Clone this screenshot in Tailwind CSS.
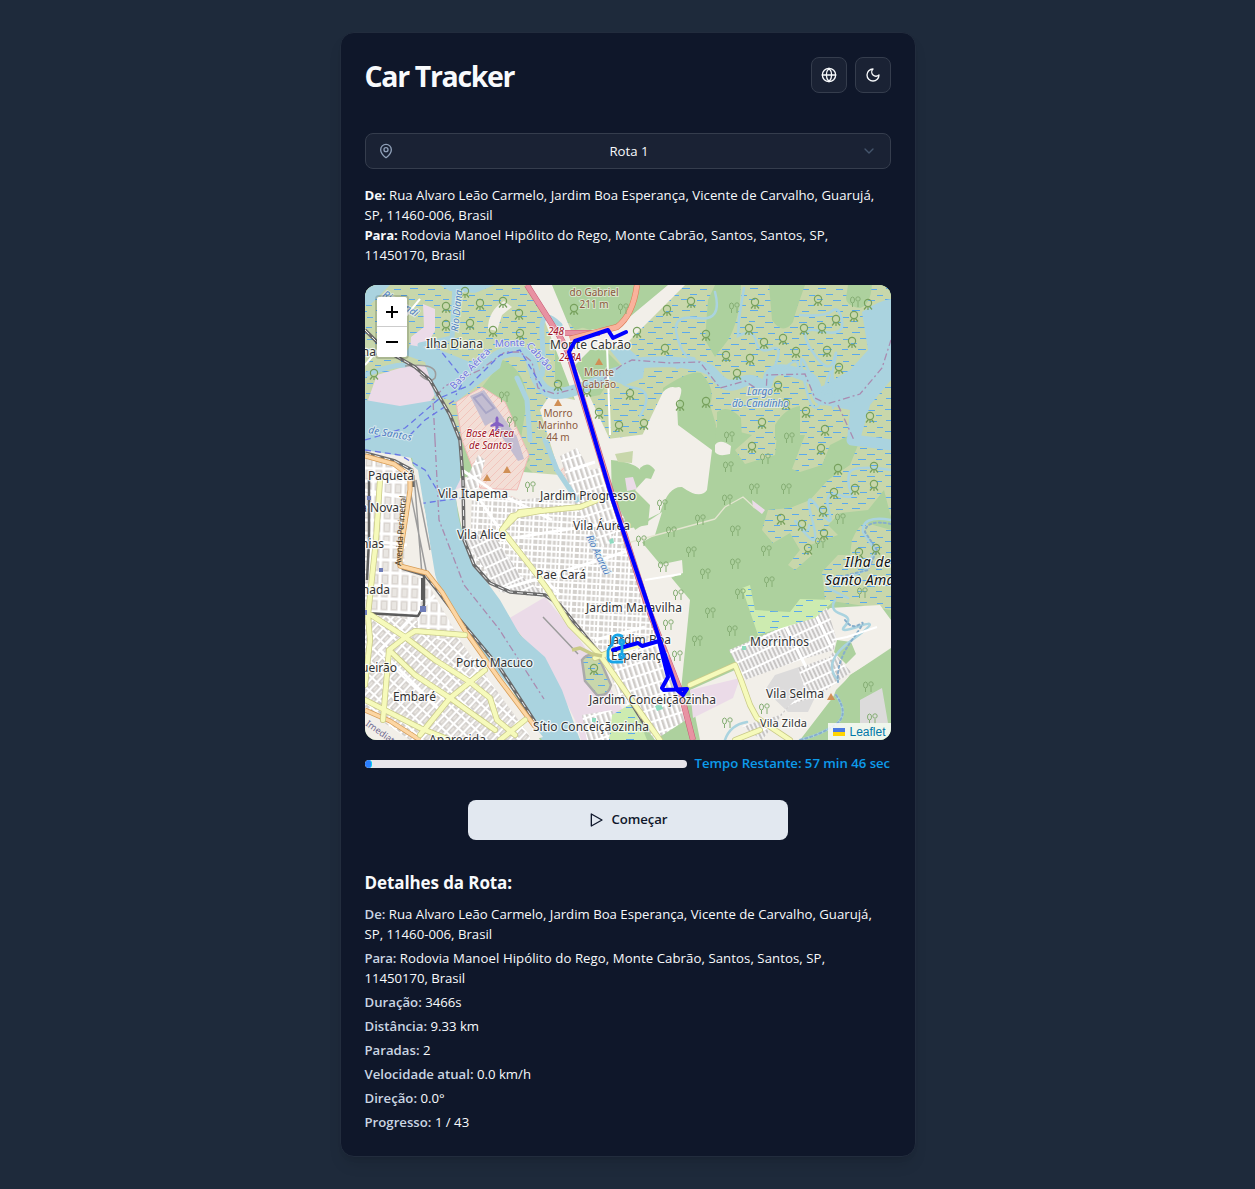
<!DOCTYPE html>
<html lang="pt-BR">
<head>
<meta charset="utf-8">
<title>Car Tracker</title>
<script src="https://cdn.jsdelivr.net/npm/@tailwindcss/browser@4"></script>
</head>
<body class="min-h-screen bg-[#1e2a3b] p-8 font-['Segoe_UI','Open_Sans',sans-serif] text-[13.2px] text-slate-50">
<main class="mx-auto max-w-xl rounded-[14px] border border-[#222c3d] bg-[#0f172a] shadow-lg">
  <header class="flex items-center justify-between p-6">
    <h1 class="pt-[3px] text-[28.5px] leading-[33px] font-bold tracking-[-1.35px]">Car Tracker</h1>
    <div class="flex gap-2">
      <button class="flex size-9 items-center justify-center rounded-lg border border-[#353d4d] bg-[#1a2234]">
        <svg class="size-4" viewBox="0 0 24 24" fill="none" stroke="currentColor" stroke-width="2" stroke-linecap="round" stroke-linejoin="round"><circle cx="12" cy="12" r="10"/><path d="M12 2a14.5 14.5 0 0 0 0 20 14.5 14.5 0 0 0 0-20M2 12h20"/></svg>
      </button>
      <button class="flex size-9 items-center justify-center rounded-lg border border-[#353d4d] bg-[#1a2234]">
        <svg class="size-4" viewBox="0 0 24 24" fill="none" stroke="currentColor" stroke-width="2" stroke-linecap="round" stroke-linejoin="round"><path d="M12 3a6 6 0 0 0 9 9 9 9 0 1 1-9-9Z"/></svg>
      </button>
    </div>
  </header>
  <div class="px-6 pt-4 pb-6">
    <button class="flex h-9 w-full items-center justify-between rounded-lg border border-[#353d4d] bg-[#1a2234] px-3">
      <svg class="size-4 text-slate-400" viewBox="0 0 24 24" fill="none" stroke="currentColor" stroke-width="2" stroke-linecap="round" stroke-linejoin="round"><path d="M20 10c0 4.993-5.539 10.193-7.399 11.799a1 1 0 0 1-1.202 0C9.539 20.193 4 14.993 4 10a8 8 0 0 1 16 0"/><circle cx="12" cy="10" r="3"/></svg>
      <span class="pt-px pl-[3px]">Rota 1</span>
      <svg class="size-4 text-slate-600" viewBox="0 0 24 24" fill="none" stroke="currentColor" stroke-width="2" stroke-linecap="round" stroke-linejoin="round"><path d="m6 9 6 6 6-6"/></svg>
    </button>
    <div class="mt-4 leading-5">
      <p class="tracking-[0.03px]"><b class="tracking-[-0.1px]">De:</b> Rua Alvaro Leão Carmelo, Jardim Boa Esperança, Vicente de Carvalho, Guarujá,<br>SP, 11460-006, Brasil</p>
      <p class="tracking-[0.1px]"><b class="tracking-[-0.2px]">Para:</b> Rodovia Manoel Hipólito do Rego, Monte Cabrão, Santos, Santos, SP,<br><span class="tracking-[-0.05px]">11450170, Brasil</span></p>
    </div>

    <section class="relative mt-5 h-[455px] overflow-hidden rounded-xl bg-[#add19e]">
      <svg class="block size-full" viewBox="365 285 526 455" preserveAspectRatio="none" font-family="Noto Sans" font-size="12">
        <defs>
          <pattern id="marsh" width="34" height="22" patternUnits="userSpaceOnUse">
            <rect width="34" height="22" fill="#c8d7ab"/>
            <path d="M2 2.500h8M20 3.500h7M10 8.500h7M27 9.500h6M1 13.500h6M17 14.500h8M8 19.500h8M26 19.500h6" stroke="#5aa9ee"/>
          </pattern>
          <pattern id="wet" width="24" height="16" patternUnits="userSpaceOnUse">
            <rect width="24" height="16" fill="#cdebb0"/><path d="M2 3.500h8M14 8.500h7M4 13.500h7" stroke="#5aa9ee"/>
          </pattern>
          <pattern id="gridA" width="14" height="6" patternUnits="userSpaceOnUse" patternTransform="rotate(3)">
            <rect width="14" height="6" fill="#fff"/><path d="M1 1h4v4H1zM6.500 1h3v4h-3zM11 1h2v4h-2z" fill="#d3d0cc"/>
          </pattern>
          <pattern id="gridB" width="5" height="12" patternUnits="userSpaceOnUse" patternTransform="rotate(-18)">
            <rect width="5" height="12" fill="#fff"/><path d="M1 1h2.500v10H1z" fill="#cfccc9"/>
          </pattern>
          <pattern id="gridC" width="10" height="13" patternUnits="userSpaceOnUse" patternTransform="rotate(2)">
            <rect width="10" height="13" fill="#fff"/><path d="M1.500 1.500h7v10h-7z" fill="#d9d4cf"/><path d="M3 3h4v7H3z" fill="#e9e6e2"/>
          </pattern>
          <pattern id="gridD" width="11" height="6.500" patternUnits="userSpaceOnUse" patternTransform="rotate(-47)">
            <rect width="11" height="6.500" fill="#fff"/><path d="M1 1h9v4.300H1z" fill="#d3cfcb"/><path d="M3 2.300h5v1.700H3z" fill="#eae7e2"/>
          </pattern>
          <pattern id="gridE" width="4" height="12" patternUnits="userSpaceOnUse" patternTransform="rotate(-25)">
            <rect width="4" height="12" fill="#fff"/><path d="M.800 1h2.400v10H.800z" fill="#c8c6c5"/>
          </pattern>
          <pattern id="hatch" width="8" height="8" patternUnits="userSpaceOnUse">
            <rect width="8" height="8" fill="#f3ded6"/><path d="M0 8 8 0" stroke="#f2c5bd"/>
          </pattern>
          <g id="mangrove" fill="none" stroke="#77a15d" stroke-width="1.200"><circle r="3.600"/><path d="M-1.500 3.500-4 6.500M0 4v3M1.500 3.500 4 6.500"/></g>
          <g id="tree" fill="none" stroke="#86ae75" stroke-width="1"><ellipse cx="-2.500" cy="-1" rx="2" ry="3"/><path d="M-2.500 2v4M3 1v5"/><circle cx="3" cy="-2" r="2.200"/></g>
          <path id="peak" d="M0-4 4 3H-4z" fill="#d08f55"/>
        </defs>

        <!-- forest and mangrove -->
        <path fill="#add19e" d="M365 285h526v455H365z"/>
        <path fill="url(#marsh)" d="M365 285H530L560 310 575 330 640 310 680 285H891V440L860 440 850 465 828 480 810 500 790 508 768 510 762 530 773 543 790 533 800 550 788 565 795 570 812 555 810 545 838 535 828 525 840 513 868 510 884 490 891 517V440L850 435 830 445 822 465 800 472 792 469 805 435 777 435 775 455 745 464 735 450 752 435 720 427 700 430 660 440 600 440 560 480 540 480 500 440 365 440z"/>
        <path fill="url(#marsh)" d="M852 540Q858 525 866 523L891 530V610L825 600 822 572 838 555 850 555z"/>
        <path fill="#add19e" d="M715 285H741Q740 320 728 340L715 357 705 340 708 300zM769 285H805Q796 310 793 322 783 336 772 320zM848 285H872Q870 308 858 308 846 305 846 298zM663 388Q690 370 701 373 716 388 710 405L716 425 715 440H660zM717 412Q728 404 741 418L742 440H717zM775 425Q785 408 800 406V440H775z"/>
        <path fill="#add19e" d="M535 285H680L650 305 625 325 590 330 560 320zM482 387 503 360Q525 370 527 400L520 445 530 460 510 480 490 440zM555 345h45l20 20-20 30-25 5-20-20z"/>

        <!-- clearings -->
        <path fill="#f2efe9" d="M531 285H552L572 333 620 325 668 285H685L625 345 590 350 575 365 610 440 611 480 640 540 690 600 680 700 600 740H365V450L410 455 425 510 450 590 490 650 540 740 580 740 540 660 490 590 465 545 452 480 500 470 560 475 540 410 550 395 575 400zM583 400 600 440 662 432 664 395Q690 375 677 405L678 425 712 450 707 490Q700 500 682 487 668 486 660 513L625 530 600 470zM715 445Q720 438 731 446L730 454Q718 457 715 452zM620 540 662 512 655 535 620 555zM635 570 682 560 683 573 645 588zM780 657 830 608 880 605 891 620V650L850 675 800 740H700L690 690 735 670z"/>
        <path fill="#add19e" d="M611 460Q640 462 646 478L635 490 650 505 648 525 620 530 612 500zM640 468q8-8 15 2l-4 9-10-2zM837 640l14 2 5 12-10 10-12-12zM836 690 852 674 891 648V740H806L826 715z"/>
        <path fill="#f2efe9" d="M663 392Q672 383 680 390L672 408 678 440H640z"/>
        <path fill="#c8d7ab" d="m615 454 18-3-1 12-14-1z"/>
        <path fill="#f2efe9" d="M488 329q0-18 16-28l8 6-10 8-5 16z"/>

        <!-- ports and pink industrial areas -->
        <path fill="#ebdbe8" d="M423 304 435 309V331L426 345 428 357 410 354 411 337 424 327zM377 375 410 365 425 366 438 390 430 402 406 406H370L368 400zM508 619 545 597 580 640 600 670 640 740H581L575 720 560 690 540 660zM625 478l8-1 4 12-10 2zM752 500l13 10-3 4-9-7zM690 690l50-12-7 20-40 20zM448 482l12-5 2 10-10 4z"/>
        <path fill="url(#hatch)" stroke="#f0b9b6" d="M456 402 482 387 505 402 529 455 517 490 480 488 462 440z"/>
        <path fill="#c3bdd1" d="m470 396 14-6 14 20 19 27 7 22-6 2-26-39-7 4z"/>
        <path fill="none" stroke="#a8a5c6" stroke-width="2" d="m474 398 8-4 12 14-8 5z"/>
        <path fill="#dcdbdb" d="M765 690l10-15 30-10 15 22-12 25-20 0zM860 700l22-12 6 35h-28z"/>
        <path fill="url(#hatch)" d="m492 500 20-4 20 10-5 18-30-10zM560 470l8-8 12 25-10 6z"/>

        <!-- urban fabric -->
        <path fill="url(#gridC)" d="M365 458 408 466 404 570 440 590 440 640 365 617z"/>
        <path fill="url(#gridD)" d="M365 612 440 625 462 640 530 730V740H410L365 710z"/>
        <path fill="url(#gridC)" d="M418 590 440 590 470 634 440 640 418 632z"/>
        <path fill="url(#gridA)" d="M472 490 500 492 520 500 600 490 620 510 655 630 660 670 625 680 580 625 550 598 500 590 470 560z"/>
        <path fill="url(#gridE)" d="M465 540 500 592 550 598 520 575 490 530z"/>
        <path fill="url(#gridB)" d="M560 456 577 448 590 470 600 468 625 520 603 548 575 505z"/>
        <path fill="url(#gridB)" d="M605 660 655 635 680 700 686 720 655 740 640 720 620 700zM582 715l30-5 15 30h-40zM462 488 478 455 485 460 478 490z"/>
        <path fill="url(#gridE)" d="M729 650 827 608 836 637 834 650 800 660 745 680zM798 668 826 658 832 675 805 690zM833 652 851 672 820 695 790 705 762 740 742 726 780 715 805 690z"/>
        <path d="m462 470 30 20 60 30M500 590 600 560 630 550M500 540l95-15M480 500l30 45 50 50M605 660l55-22M595 640l50-13M365 490l50 10M365 540l42 5M440 590l-60 60 60 60M570 470l25-8M786 627l20 40M815 613l17 35" fill="none" stroke="#fff" stroke-width="3"/>
        <path fill="url(#wet)" d="M742 588 750 585 755 610 790 612 800 599 835 600 815 618 758 635z"/>
        <path fill="url(#marsh)" stroke="#aaa" stroke-width="2.500" d="M582 660q8-10 18 0l11 25q-3 12-14 10l-12-14z"/>
        <path fill="url(#wet)" d="M612 715l20-12 15 37h-38z"/>
        <path fill="#8fdbc0" d="m609 540 4-2 1 5-4 1zM742 646h4v4h-4zM655 706l6-2 2 5-6 2zM592 718h4v4h-4z"/>

        <!-- water -->
        <g fill="#aad3df">
          <path d="M365 400 400 406 436 400 425 362 405 355 410 345 440 350 470 362 485 356 505 350 500 368 456 402 440 397 460 438 460 480 455 490 458 515 465 545 478 570 500 600 520 635 545 657 562 690 580 740H542L520 700 470 638 440 588 433 570 425 510 412 458 365 450zM440 285h55l-20 8-25-2zM365 285h25l-20 20h-5z"/>
          <path d="M862 312Q880 300 891 299V380L870 405 860 440H847L850 410 825 405 812 390 825 385 850 370 868 350z"/>
          <path d="M610 350 628 348 645 363 643 378 625 385 610 380 600 385 600 372 622 365z"/>
        </g>
        <g fill="none" stroke="#aad3df" stroke-linecap="round">
          <path stroke-width="11" d="M490 363C500 348 528 348 531 360S538 390 552 393 590 385 605 378M628 365C650 360 690 360 710 370 721 382 726 390 742 382S765 396 768 380 790 370 806 376 812 398 823 400L850 397M852 440l25 3 14 2"/>
          <path stroke-width="5" d="M420 345 452 338 455 285M365 375q25-10 40-10M560 325q-20-20-18 10t0 40M517 378l10 22 3 40M545 440l12 30 20 30"/>
          <path stroke-width="2.500" d="M715 292q8 30-18 26t-20 18 15 22-15 10M744 288l-5 30-1 18q15-8 18 5t15 8 5 14 10 4 10 10M800 315q25 2 32-4t10 10-22 10-8 20 22 8-2 16-22-1-5 10 20 4 8 20M891 470q-40-6-42 4t2 18-12 3-10 16-10-2-7 10-7 14-6-8 10 0M891 520q-30-5-28 12l12 18-9 20-30 12q-15-16-8 6l20 10M620 370q-5 15 15 18t5 28M835 600q-6 10 6 14t4 12 15 0-8 14-14 40M836 695Q850 715 835 725T800 740M725 740q5-15 22-18"/>
          <path stroke-width="2" stroke="#87aecb" stroke-dasharray="2 3" d="M891 524q-25-5-26 8l12 18-9 20-32 8M845 620q7 10 15 4t-8 16-14 42M836 695Q850 715 835 725T800 740"/>
        </g>
        <g fill="none">
          <path stroke="#aa8bb0" stroke-width="1.300" stroke-dasharray="7 3 2 3" d="M435 440 433 400 445 386 480 370 505 352 520 352 532 362 538 388 555 394 600 382 622 365 632 360 670 363 700 362 720 388 745 381 766 395 767 375 805 374 815 398 827 404 860 394 882 368 891 340M838 405l16 35M435 440l4 80 25 65 35 44 45 70"/>
          <path stroke="#6977e6" stroke-width="1.300" stroke-dasharray="6 4" d="M365 440 405 428 440 398 470 385 500 355 520 350 545 392M410 435 425 420 455 400M436 345l28 35-8 15M365 450 400 455 425 470 440 495M410 505 475 496"/>
        </g>

        <!-- quays, railways and roads -->
        <path fill="#f2efe9" d="m412 465 6 5 18 110 42 72 65 85-10 3-70-95-40-70-17-10z"/>
        <g fill="none" stroke-linejoin="round">
          <path stroke="#9c9c9c" stroke-width="1.500" d="m414 475 8 100M410 490l18 90M416 480l14 70M543 617l35 37M405 366q35-4 30 12-5 6-15-3"/>
          <path stroke="#6a6a6a" stroke-width="3.500" d="M365 330 385 350 415 367 430 380 450 415 460 440 463 480 464 540 474 565 490 583 510 592 545 595 560 605 605 660 645 725M365 453 395 461 412 470 413 487M402 568 425 575 437 590 455 614 500 668 537 725"/>
          <path stroke="#eee" stroke-width="1" stroke-dasharray="6 4" d="M365 330 385 350 415 367 430 380 450 415 460 440 463 480 464 540 474 565 490 583 510 592 545 595 560 605 605 660 645 725M365 453 395 461 412 470M425 575 437 590 455 614 500 668 537 725"/>
          <path stroke="#5c5c5c" stroke-width="2.500" d="M424 575V605L418 616 365 613M369 480v60l-2 40"/>
          <path stroke="#5c5c5c" stroke-width="4" d="M423 578v22"/>
          <path stroke="#d79c55" stroke-width="5" d="M365 456 394 464 410 476 410 490 400 555V566L427 573 442 592 466 632 500 680 536 728M365 710 390 721 420 740"/>
          <path stroke="#fcd6a4" stroke-width="3.500" d="M365 456 394 464 410 476 410 490 400 555V566L427 573 442 592 466 632 500 680 536 728M365 710 390 721 420 740"/>
          <g stroke-linecap="round"><path stroke="#c9ca88" stroke-width="6" d="M380 480 376 540 368 615 370 640 365 685M371 615 405 637 435 660 470 682 490 698 497 720 515 735M407 636 415 631 465 635M407 636 389 650 383 720M389 650 415 675 450 698 495 730M485 670 450 698 420 735M525 720 500 740M365 700 420 728 450 740M540 510 520 512 502 530 535 572 548 590 570 625 600 655 635 705 660 740M502 530l10-14 28-5 40-4 20-8M615 650l-20 8M690 685 735 665 741 680 750 705 757 718 790 740M735 740l25-10"/>
          <path stroke="#f6fabb" stroke-width="4.500" d="M380 480 376 540 368 615 370 640 365 685M371 615 405 637 435 660 470 682 490 698 497 720 515 735M407 636 415 631 465 635M407 636 389 650 383 720M389 650 415 675 450 698 495 730M485 670 450 698 420 735M525 720 500 740M365 700 420 728 450 740M540 510 520 512 502 530 535 572 548 590 570 625 600 655 635 705 660 740M502 530l10-14 28-5 40-4 20-8M615 650l-20 8M690 685 735 665 741 680 750 705 757 718 790 740M735 740l25-10M600 656 640 645"/></g>
          <path stroke="#c9ca88" stroke-width="3.500" d="m572 650 8-2 12 6 10 2"/>
          <path stroke="#fff" stroke-width="2" d="m832 640 15-3 30-10M607 345l3 90M365 365l55-66M645 580l36-6"/>
          <path stroke="#e4e5d0" stroke-width="1.300" d="M715 519l10-12 18-10 12 11M620 545l95-26"/>
          <path stroke="#c75a75" stroke-width="6" d="M527 285 560 337 568 352 612 495 648 608 680 690 693 740M565 333h35"/>
          <path stroke="#e892a2" stroke-width="5" d="M527 285 560 337 568 352 612 495 648 608 680 690 693 740M565 333h35"/>
          <path stroke="#dc7952" stroke-width="6" d="M637 285Q633 315 617 327L570 339"/><path stroke="#f9b29c" stroke-width="5" d="M637 285Q633 315 617 327L570 339"/>
        </g>
        <path fill="#6f7db9" d="M420 606h6v6h-6zM379 568h4v4h-4zM367 496h4v4h-4zM365 610h2v5h-2z"/>
        <g id="flora"></g>
        <use href="#peak" x="599" y="362"/><use href="#peak" x="558" y="403"/><use href="#peak" x="507" y="470"/><use href="#peak" x="487" y="478"/><use href="#peak" x="831" y="697"/>
        <path fill="#8461c4" d="m497 416 1.500 2v4l5 3v2l-5-1v3l2 2h-7l2-2v-3l-5 1v-2l5-3v-4z"/>

        <!-- place names -->
        <g fill="#4f7fc0" stroke="#e8f1f4" stroke-width="2" paint-order="stroke" stroke-opacity=".7" font-style="italic" font-size="10">
          <text transform="translate(458 332) rotate(-84)" textLength="42">Rio Diana</text>
          <text transform="translate(382 296) rotate(32)" textLength="40">Rio Jandi</text>
          <text x="747" y="395" textLength="26">Largo</text><text x="732" y="407" textLength="57">do Candinho</text>
          <text transform="translate(368 433) rotate(10)" textLength="44">de Santos</text>
          <text transform="translate(586 537) rotate(64)" textLength="43">Rio Acaraú</text>
        </g>
        <g fill="#6c73dc" stroke="#e0eaf0" stroke-width="1.500" paint-order="stroke" font-size="10">
          <text transform="translate(454 390) rotate(-46)" textLength="53">Base Aérea</text>
          <text transform="translate(495 347) rotate(-2)" textLength="30">Monte</text><text transform="translate(526 346) rotate(48)" textLength="34">Cabrão</text>
        </g>
        <g fill="#8b5a41" stroke="#f4f1e9" stroke-width="2" stroke-opacity=".6" paint-order="stroke" font-size="10" text-anchor="middle">
          <text x="594" y="296" textLength="49">do Gabriel</text><text x="594" y="308" textLength="29">211 m</text>
          <text x="599" y="376" textLength="30">Monte</text><text x="599" y="388" textLength="34">Cabrão</text>
          <text x="558" y="417" textLength="29">Morro</text><text x="558" y="429" textLength="40">Marinho</text><text x="558" y="441" textLength="23">44 m</text>
        </g>
        <g fill="#a01226" stroke="#fff" stroke-width="2" stroke-opacity=".7" paint-order="stroke" font-style="italic" font-size="10">
          <text x="466" y="437" textLength="48">Base Aérea</text><text x="469" y="449" textLength="43">de Santos</text><text x="548" y="335" textLength="16">248</text><text x="559" y="361" textLength="22">248A</text>
        </g>
        <text transform="translate(401 566) rotate(-86)" font-size="8.500" textLength="70" fill="#443318">Avenida Perimetral</text>
        <text transform="translate(365 725) rotate(35)" font-size="9" fill="#706a92">Imediata</text>
        <g fill="#333" stroke="#fff" stroke-opacity=".75" stroke-width="2.500" stroke-linejoin="round" paint-order="stroke">
          <text x="426" y="348" textLength="57">Ilha Diana</text><text x="376" y="356" text-anchor="end">na</text><text x="550" y="349" textLength="81">Monte Cabrão</text>
          <text x="368" y="480" textLength="46">Paquetá</text><text x="438" y="498" textLength="70">Vila Itapema</text><text x="540" y="500" textLength="96">Jardim Progresso</text>
          <text x="399" y="512" text-anchor="end">Vila Nova</text><text x="457" y="539" textLength="49">Vila Alice</text><text x="573" y="530" textLength="57">Vila Áurea</text>
          <text x="384" y="548" text-anchor="end">nias</text><text x="536" y="579" textLength="50">Pae Cará</text><text x="390" y="594" text-anchor="end">nada</text>
          <text x="586" y="612" textLength="96">Jardim Maravilha</text><text x="609" y="644" textLength="62">Jardim Boa</text><text x="611" y="660" textLength="57">Esperança</text>
          <text x="456" y="667" textLength="77">Porto Macuco</text><text x="397" y="672" text-anchor="end">ueirão</text><text x="393" y="701" textLength="43">Embaré</text>
          <text x="429" y="744" textLength="57">Aparecida</text><text x="589" y="704" textLength="127">Jardim Conceiçãozinha</text><text x="533" y="731" textLength="116">Sítio Conceiçãozinha</text>
          <text x="750" y="646" textLength="59">Morrinhos</text><text x="766" y="698" textLength="58">Vila Selma</text><text x="760" y="727" textLength="47" font-size="11">Vila Zilda</text>
          <g font-style="italic" font-size="14" fill="#111"><text x="845" y="567" textLength="46">Ilha de</text><text x="825" y="585" textLength="83">Santo Amaro</text></g>
        </g>

        <!-- tracked route and vehicle -->
        <path d="M626 332 613 338 608 330 575 341 569 352 595 440 612 498 643 590 659 638 677 690 683 695 687 689 664 690 662 688 668 677 659 641 642 646 638 643 613 650" fill="none" stroke="#00f" stroke-width="4" stroke-linejoin="round" stroke-linecap="round"/>
        <g fill="none" stroke="#18a5e7" stroke-width="2.800" stroke-linecap="round"><path d="M622 636q-8-3-9 3l-1 6q-4 3-4 7v6q1 5 8 4h6M622 646v6"/><circle cx="621.700" cy="642" r="2"/><circle cx="621.700" cy="656" r="2"/></g>
      </svg>
      <div class="absolute top-2.5 left-2.5 flex w-[34px] flex-col overflow-hidden rounded border-2 border-black/15 bg-clip-padding">
        <button class="flex h-[30px] items-center justify-center border-b border-[#ccc] bg-white"><svg class="size-3.5" viewBox="0 0 14 14" stroke="#000" stroke-width="2"><path d="M1 7h12M7 1v12"/></svg></button>
        <button class="flex h-[30px] items-center justify-center bg-white"><svg class="size-3.5" viewBox="0 0 14 14" stroke="#000" stroke-width="2"><path d="M1 7h12"/></svg></button>
      </div>
      <div class="absolute right-0 bottom-0 flex h-[17px] items-center gap-1 bg-white/80 px-[5px] font-['Liberation_Sans',sans-serif] text-xs text-[#0078a8]">
        <svg class="h-2 w-3" viewBox="0 0 12 8"><path fill="#4c7be1" d="M0 0h12v4H0z"/><path fill="#ffd500" d="M0 4h12v4H0z"/></svg>Leaflet
      </div>
    </section>

    <div class="mt-[13px] flex h-5 items-center gap-2">
      <div class="mt-0.5 h-2 flex-1 overflow-hidden rounded-full bg-[#e7e5ea]"><div class="h-full w-[7px] rounded-full border-r border-cyan-400 bg-blue-500"></div></div>
      <span class="w-[196px] pt-px font-semibold tracking-[-0.03px] whitespace-nowrap text-[#0d9bea]">Tempo Restante: 57 min 46 sec</span>
    </div>
    <button class="mx-auto mt-[27px] flex h-10 w-80 items-center justify-center gap-2 rounded-lg bg-slate-200 text-[13.2px] font-semibold tracking-[-0.1px] text-slate-900">
      <svg class="size-4" viewBox="0 0 24 24" fill="none" stroke="currentColor" stroke-width="2" stroke-linejoin="round"><path d="m5 3 16 9-16 9z"/></svg>Começar
    </button>
    <h2 class="mt-[29px] text-[17px] leading-7 font-bold tracking-[-0.1px]">Detalhes da Rota:</h2>
    <div class="mt-[7px] space-y-1 leading-5">
      <p><b class="font-semibold text-slate-300">De:</b> Rua Alvaro Leão Carmelo, Jardim Boa Esperança, Vicente de Carvalho, Guarujá,<br>SP, 11460-006, Brasil</p>
      <p class="tracking-[0.07px]"><b class="font-semibold tracking-[-0.2px] text-slate-300">Para:</b> Rodovia Manoel Hipólito do Rego, Monte Cabrão, Santos, Santos, SP,<br><span class="tracking-[-0.05px]">11450170, Brasil</span></p>
      <p><b class="font-semibold text-slate-300">Duração:</b> 3466s</p>
      <p><b class="font-semibold text-slate-300">Distância:</b> 9.33 km</p>
      <p><b class="font-semibold text-slate-300">Paradas:</b> 2</p>
      <p><b class="font-semibold text-slate-300">Velocidade atual:</b> 0.0 km/h</p>
      <p><b class="font-semibold text-slate-300">Direção:</b> 0.0°</p>
      <p><b class="font-semibold text-slate-300">Progresso:</b> 1 / 43</p>
    </div>
  </div>
</main>
<script>
  const plants = {
    mangrove: [[446,306],[480,303],[503,301],[519,313],[470,323],[493,330],[520,333],[446,324],[374,373],[465,291],[637,331],[667,309],[691,301],[665,348],[706,334],[574,308],[587,390],[558,384],[599,412],[619,425],[644,423],[630,393],[680,404],[706,401],[755,302],[749,328],[764,342],[783,338],[726,355],[750,358],[796,351],[804,328],[822,327],[836,319],[854,315],[868,303],[852,341],[818,299],[827,350],[839,367],[778,385],[786,403],[806,411],[762,422],[825,429],[870,416],[737,373],[752,446],[821,448],[838,468],[874,466],[855,488],[834,492],[874,484],[823,510],[781,518],[802,524],[824,533],[808,548],[876,548],[859,552],[594,668]],
    tree: [[504,396],[512,421],[530,486],[623,308],[734,307],[855,301],[729,436],[789,437],[728,466],[754,488],[786,488],[765,458],[727,499],[662,504],[700,519],[671,531],[641,540],[691,551],[663,566],[705,573],[735,530],[766,550],[820,542],[840,518],[735,563],[769,581],[697,640],[710,612],[677,655],[668,624],[678,594],[732,630],[862,592],[740,593],[868,686],[727,722],[872,718],[764,708]]
  };
  const layer = document.getElementById('flora');
  for (const [kind, spots] of Object.entries(plants))
    for (const [x, y] of spots) {
      const mark = document.createElementNS('http://www.w3.org/2000/svg', 'use');
      mark.setAttribute('href', '#' + kind);
      mark.setAttribute('x', x);
      mark.setAttribute('y', y);
      layer.append(mark);
    }
</script>
</body>
</html>
